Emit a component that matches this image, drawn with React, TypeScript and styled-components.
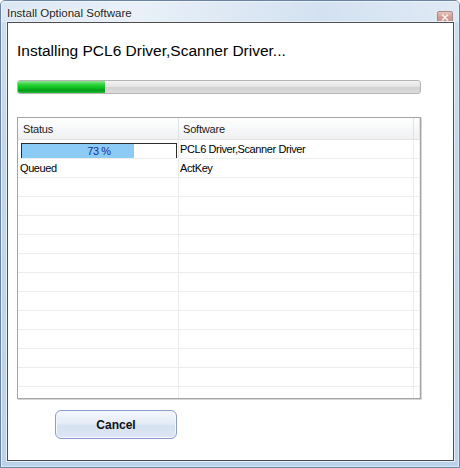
import React from "react";
import styled, { createGlobalStyle } from "styled-components";

const GlobalStyle = createGlobalStyle`
  html, body { margin: 0; padding: 0; background: #ffffff; }
  body { font-family: "Liberation Sans", Arial, sans-serif; }
  * { box-sizing: border-box; }
`;

const Window = styled.div`
  width: 460px;
  height: 468px;
  display: flex;
  flex-direction: column;
  border: 1px solid #6b84a3;
  border-radius: 5px 5px 0 0;
  background: linear-gradient(to bottom, #cfdff0 0%, #c3d6eb 30%, #bcd2ea 100%);
  box-shadow: inset 1px 1px 0 #e4eef9, inset -1px -1px 0 #d9e6f4;
`;

const TitleBar = styled.div`
  height: 21px;
  display: flex;
  align-items: flex-start;
  padding: 0 6px 0 6px;
  background: linear-gradient(to right, rgba(255,255,255,0.25), rgba(255,255,255,0.55) 30%, rgba(255,255,255,0.1) 70%, rgba(255,255,255,0.35));
`;

const TitleText = styled.span`
  margin-top: 5px;
  font-family: "Liberation Sans", Arial, sans-serif;
  font-size: 11.5px;
  line-height: 14px;
  color: #1e1e1e;
  text-shadow: 0 0 6px #ffffff, 0 0 3px #ffffff;
`;

const CloseButton = styled.div`
  margin-left: auto;
  margin-top: 10px;
  width: 16px;
  height: 12px;
  border: 1px solid #a68a8a;
  border-radius: 2px;
  background: linear-gradient(to bottom, #e8c3bd, #d29d95 50%, #c9928a);
  display: flex;
  align-items: center;
  justify-content: center;
`;

const Client = styled.div`
  flex: 1;
  margin: 0 5px 6px 6px;
  border: 1px solid #4d4d4d;
  box-shadow: 0 0 0 1px #e8f0f8;
  background: #ffffff;
  display: flex;
  flex-direction: column;
  padding: 19px 32px 0 9px;
`;

const Heading = styled.div`
  font-family: "Liberation Sans", Arial, sans-serif;
  font-size: 15.5px;
  line-height: 18px;
  color: #000000;
`;

const Progress = styled.div`
  margin-top: 20px;
  width: 404px;
  height: 14px;
  border: 1px solid #b4b4b4;
  border-radius: 3px;
  overflow: hidden;
  background: linear-gradient(to bottom, #f4f4f4 0%, #e4e4e4 45%, #d2d2d2 55%, #dcdcdc 100%);
`;

const ProgressFill = styled.div`
  height: 100%;
  background: linear-gradient(to bottom, #8fe58f 0%, #2fd33a 30%, #0ebf22 55%, #079a1a 80%, #23c232 100%);
`;

const Table = styled.div`
  margin-top: 23px;
  width: 404px;
  height: 282px;
  border: 1px solid #a4a4a4;
  box-shadow: 1px 1px 0 #d6d6d6;
  display: flex;
  flex-direction: column;
  overflow: hidden;
`;

const HeaderRow = styled.div`
  height: 22px;
  flex: none;
  display: grid;
  grid-template-columns: 161px 235px 1fr;
  border-bottom: 1px solid #e2e2e2;
  background: linear-gradient(to bottom, #ffffff 0%, #f7f8f9 50%, #eef0f2 100%);
`;

const HeaderCell = styled.div<{ $pad: number }>`
  display: flex;
  align-items: center;
  padding-left: ${(p) => p.$pad}px;
  border-right: 1px solid #dfe2e6;
  font-family: "Liberation Sans", Arial, sans-serif;
  font-size: 11px;
  letter-spacing: -0.2px;
  color: #1a1a1a;
`;

const Body = styled.div`
  flex: 1;
  overflow: hidden;
`;

const Row = styled.div`
  height: 19px;
  display: grid;
  grid-template-columns: 161px 235px 1fr;
  border-bottom: 1px solid #ededed;
`;

const Cell = styled.div<{ $pad: number; $top?: boolean }>`
  display: flex;
  align-items: ${(p) => (p.$top ? "flex-start" : "center")};
  padding-left: ${(p) => p.$pad}px;
  border-right: 1px solid #ececec;
  font-family: "Liberation Sans", Arial, sans-serif;
  font-size: 11px;
  letter-spacing: -0.4px;
  color: #000000;
  white-space: nowrap;
  overflow: hidden;
`;

const CellBar = styled.div`
  position: relative;
  margin: 3px 0 0 3px;
  width: 156px;
  height: 16px;
  border: 1px solid #2c2c2c;
  background: #ffffff;
`;

const CellBarFill = styled.div`
  height: 100%;
  background: #8ccbf6;
`;

const CellBarLabel = styled.span`
  position: absolute;
  inset: 0;
  display: flex;
  align-items: center;
  justify-content: center;
  font-family: "Liberation Sans", Arial, sans-serif;
  font-size: 11px;
  color: #1a2f8f;
`;

const CancelButton = styled.button`
  align-self: flex-start;
  margin: 11px 0 0 38px;
  width: 122px;
  height: 29px;
  border: 1px solid #8b9ccc;
  border-radius: 6px;
  background: linear-gradient(to bottom, #f4f7fc 0%, #e6edf7 45%, #d6e1f1 55%, #dde6f3 100%);
  box-shadow: inset 0 0 0 1px #f4f8fd;
  font-family: "Liberation Sans", Arial, sans-serif;
  font-weight: bold;
  font-size: 12px;
  color: #111111;
  padding: 0;
`;

const rows: { status: string | number; software: string }[] = [
  { status: 73, software: "PCL6 Driver,Scanner Driver" },
  { status: "Queued", software: "ActKey" },
];

export default function App() {
  const empty = Array.from({ length: 12 });
  return (
    <>
      <GlobalStyle />
      <Window>
        <TitleBar>
          <TitleText>Install Optional Software</TitleText>
          <CloseButton>
            <svg width="8" height="7" viewBox="0 0 8 7">
              <path d="M1 0.5 L7 6.5 M7 0.5 L1 6.5" stroke="#f7eeee" strokeWidth="1.6" />
            </svg>
          </CloseButton>
        </TitleBar>
        <Client>
          <Heading>Installing PCL6 Driver,Scanner Driver...</Heading>
          <Progress>
            <ProgressFill style={{ width: "21.7%" }} />
          </Progress>
          <Table>
            <HeaderRow>
              <HeaderCell $pad={5}>Status</HeaderCell>
              <HeaderCell $pad={4}>Software</HeaderCell>
              <HeaderCell $pad={0} />
            </HeaderRow>
            <Body>
              {rows.map((r, i) => (
                <Row key={i}>
                  {typeof r.status === "number" ? (
                    <Cell $pad={0} $top>
                      <CellBar>
                        <CellBarFill style={{ width: `${r.status}%` }} />
                        <CellBarLabel>{r.status} %</CellBarLabel>
                      </CellBar>
                    </Cell>
                  ) : (
                    <Cell $pad={2}>{r.status}</Cell>
                  )}
                  <Cell $pad={1}>{r.software}</Cell>
                  <Cell $pad={0} />
                </Row>
              ))}
              {empty.map((_, i) => (
                <Row key={`e${i}`}>
                  <Cell $pad={0} />
                  <Cell $pad={0} />
                  <Cell $pad={0} />
                </Row>
              ))}
            </Body>
          </Table>
          <CancelButton>Cancel</CancelButton>
        </Client>
      </Window>
    </>
  );
}
